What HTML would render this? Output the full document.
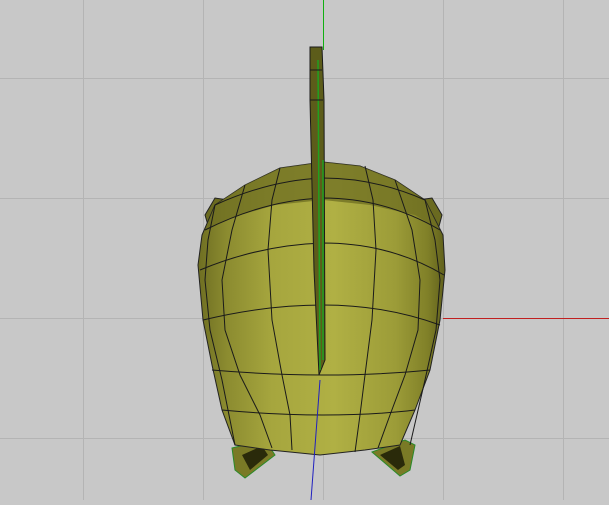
<!DOCTYPE html>
<html><head><style>body{margin:0;background:#c8c8c8;width:609px;height:500px;overflow:hidden}</style></head><body>
<svg width="609" height="500" viewBox="0 0 609 500" xmlns="http://www.w3.org/2000/svg">
<defs>
<linearGradient id="g" x1="0" x2="1" y1="0" y2="0">
<stop offset="0" stop-color="#6e6e22"/><stop offset="0.12" stop-color="#8c8c30"/><stop offset="0.3" stop-color="#a6a63e"/><stop offset="0.55" stop-color="#b0b044"/><stop offset="0.8" stop-color="#9c9c38"/><stop offset="0.93" stop-color="#808028"/><stop offset="1" stop-color="#60601c"/>
</linearGradient>
</defs>
<g stroke="#b4b4b4" stroke-width="1">
<line x1="83.5" y1="0" x2="83.5" y2="500"/><line x1="203.5" y1="0" x2="203.5" y2="500"/><line x1="443.5" y1="0" x2="443.5" y2="500"/><line x1="563.5" y1="0" x2="563.5" y2="500"/>
<line x1="0" y1="78.5" x2="609" y2="78.5"/><line x1="0" y1="198.5" x2="609" y2="198.5"/><line x1="0" y1="438.5" x2="609" y2="438.5"/><line x1="0" y1="318.5" x2="443" y2="318.5"/><line x1="323.5" y1="380" x2="323.5" y2="500"/>
</g>
<line x1="323.5" y1="0" x2="323.5" y2="50" stroke="#10b010"/>
<line x1="443" y1="318.5" x2="609" y2="318.5" stroke="#c02020"/>
<polygon points="232,448 265,440 275,455 245,478 235,470" fill="#7a7a26" stroke="#2a8a2a"/>
<polygon points="372,452 405,440 415,445 410,470 400,476" fill="#7a7a26" stroke="#2a8a2a"/>
<polygon points="242,455 262,446 268,455 250,470" fill="#2a2a0a"/>
<polygon points="380,455 400,446 405,465 398,470" fill="#2a2a0a"/>
<polygon points="205,215 215,198 228,200 225,225 210,232" fill="#6a6a20" stroke="#222"/>
<polygon points="418,200 432,198 442,215 438,230 420,222" fill="#6a6a20" stroke="#222"/>
<polygon points="323,162 280,168 245,185 215,205 202,235 198,265 203,320 212,365 222,410 235,445 270,450 320,455 365,450 400,445 415,410 430,370 440,320 445,270 443,235 425,200 395,180 360,166" fill="url(#g)" stroke="#222"/>
<polygon points="323,162 280,168 245,185 215,205 205,230 230,218 275,205 323,200 370,205 415,215 440,230 425,200 395,180 360,166" fill="#6e6e22" opacity="0.75"/>
<g stroke="#1a1a1a" fill="none" stroke-width="1">
<path d="M215,205 Q270,180 323,178 Q375,178 425,200"/>
<path d="M205,230 Q265,200 323,198 Q385,198 440,230"/>
<path d="M200,270 Q260,245 323,243 Q390,243 444,275"/>
<path d="M203,320 Q265,305 323,305 Q385,305 440,325"/>
<path d="M212,370 Q270,375 323,375 Q380,375 430,370"/>
<path d="M222,410 Q275,415 323,415 Q375,415 415,410"/>
<path d="M280,168 L272,200 L268,250 L272,320 L282,375 L290,415 L292,450"/>
<path d="M245,185 L232,230 L222,280 L225,330 L240,375 L260,415 L272,448"/>
<path d="M365,166 L373,200 L376,250 L372,320 L365,375 L360,415 L355,452"/>
<path d="M395,180 L412,230 L420,280 L418,330 L405,375 L390,415 L378,448"/>
<path d="M215,205 L208,240 L205,280 L210,330 L222,380 L235,445"/>
<path d="M425,200 L435,240 L440,280 L436,330 L425,380 L410,445"/>
</g>
<polygon points="310,47 322,47 324,100 325,360 319,375 314,270 310,100" fill="#5c5c1a" stroke="#1a1a1a"/>
<line x1="318" y1="60" x2="320" y2="370" stroke="#20a020" stroke-width="1.5"/>
<line x1="323" y1="160" x2="323" y2="360" stroke="#20a020" stroke-width="1.5"/>
<line x1="310" y1="70" x2="322" y2="70" stroke="#1a1a1a"/>
<line x1="310" y1="100" x2="323" y2="100" stroke="#1a1a1a"/>
<line x1="320" y1="380" x2="311" y2="500" stroke="#2020c0"/>
</svg>
</body></html>
